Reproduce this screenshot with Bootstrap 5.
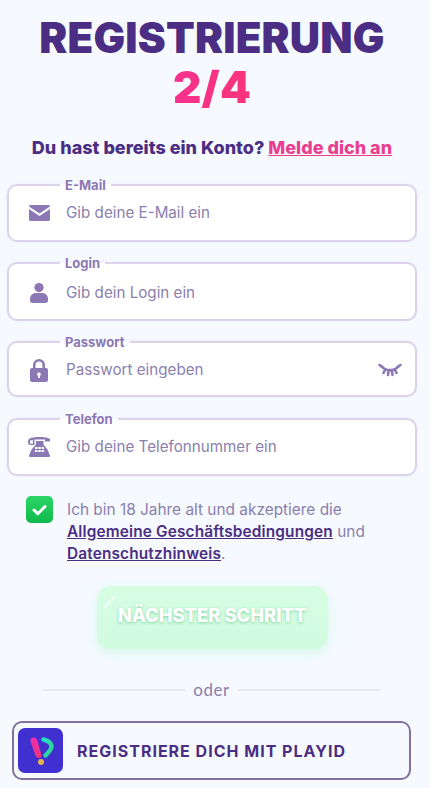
<!DOCTYPE html>
<html lang="de">
<head>
    <meta charset="UTF-8">
    <meta name="viewport" content="width=device-width, initial-scale=1.0">
    <title>Registrierung</title>
    <link href="https://cdn.jsdelivr.net/npm/bootstrap@5.3.0/dist/css/bootstrap.min.css" rel="stylesheet">
    <style>
        body {
            background-color: #f6faff;
            font-family: 'Inter', 'Roboto', sans-serif;
            color: #4b2e83;
            overflow: hidden;
        }
        .page-wrap {
            height: 788px;
            padding: 13px 13px 0 7px;
        }
        .reg-title {
            font-size: 42px;
            font-weight: 900;
            line-height: 50px;
            letter-spacing: 0.2px;
            color: #4b2e83;
            margin: 0;
        }
        .reg-step {
            display: block;
            margin-top: -1px;
            font-size: 44px;
            background: linear-gradient(90deg, #f02bb4, #ff3b55);
            -webkit-background-clip: text;
            background-clip: text;
            color: transparent;
        }
        .have-account {
            font-size: 18px;
            font-weight: 800;
            line-height: 24px;
            margin: 24px 0 0 0;
            letter-spacing: 0;
        }
        .have-account a { color: #e8408f; }
        .form-wrap { margin-top: 18px; }
        .field-box {
            background: #fff;
            border: 2px solid #dcd3ea;
            border-radius: 10px;
            width: 410px;
            height: 64px;
            padding: 0 13px 0 18px;
            margin-bottom: 14px;
            box-shadow: 0 0 2px rgba(120, 100, 170, .15);
        }
        .field-login { height: 65px; }
        .field-login .field-row { height: 46px; }
        .field-pass { height: 62px; margin-bottom: 15px; }
        .field-box legend {
            float: none;
            width: auto;
            margin: 0 0 0 33px;
            padding: 0 5px;
            font-size: 13px;
            font-weight: 700;
            line-height: 14px;
            color: #8b78b5;
        }
        .field-row { height: 42px; }
        .field-ico { flex: none; width: 24px; display: flex; justify-content: center; margin-right: 15px; }
        .field-input {
            border: 0;
            padding: 0;
            background: transparent;
            font-size: 15.2px;
            color: #8b7fae;
            box-shadow: none;
        }
        .field-input::placeholder { color: #8b7fae; opacity: 1; }
        .field-input:focus { box-shadow: none; background: transparent; }
        .eye-ico { flex: none; }
        .agree-row { padding: 0 0 0 19px; margin-top: 20px; }
        .agree-box {
            width: 27px;
            height: 27px;
            border-radius: 5px;
            background: linear-gradient(180deg, #2bd665, #10b94d);
            flex: none;
        }
        .agree-text {
            width: 330px;
            margin: 3px 0 0 14px;
            font-size: 15.4px;
            line-height: 22px;
            color: #8b7fae;
        }
        .agree-text a { color: #4b2e83; font-weight: 600; letter-spacing: .15px; }
        .next-btn {
            display: block;
            width: 231px;
            height: 63px;
            margin: 21px auto 0 auto;
            padding: 0 0 4px 0;
            border: 0;
            border-radius: 14px;
            background: linear-gradient(180deg, #d6fde3, #d0fce0);
            box-shadow: 0 4px 12px rgba(120, 240, 170, .25);
            color: #fff;
            font-size: 18.4px;
            font-weight: 800;
            text-shadow: 0 1px 3px rgba(110, 200, 150, .8);
            position: relative;
        }
        .next-btn:disabled { color: #fff; opacity: 1; }
        .next-btn::before {
            content: "";
            position: absolute;
            left: 4px;
            top: 14px;
            width: 18px;
            height: 3px;
            border-radius: 3px;
            background: rgba(255, 255, 255, .45);
            filter: blur(.6px);
            transform: rotate(-47deg);
        }
        .or-row {
            width: 337px;
            margin: 31px 0 0 36px;
            font-family: 'Lato', sans-serif;
            font-size: 17px;
            line-height: 20px;
            color: #8b7fae;
            letter-spacing: .5px;
        }
        .or-row hr { flex: 1; margin: 0; border-top: 2px solid #e6e8f2; opacity: 1; }
        .playid-btn {
            width: 399px;
            height: 59px;
            margin: 21px 0 0 5px;
            padding: 0 4px;
            background: transparent;
            border: 2px solid #82719f;
            border-radius: 10px;
            color: #4b2e83;
            font-size: 16px;
            font-weight: 700;
            letter-spacing: 1px;
            text-decoration: none;
        }
        .playid-btn:hover { color: #4b2e83; }
        .playid-logo {
            width: 45px;
            height: 45px;
            border-radius: 7px;
            background: #4130d0;
            margin-right: 14px;
        }
    </style>
</head>
<body>
    <div class="page-wrap">
        <h1 class="reg-title text-center">REGISTRIERUNG <span class="reg-step">2/4</span></h1>
        <p class="have-account text-center">Du hast bereits ein Konto? <a href="#">Melde dich an</a></p>

        <form class="form-wrap">
            <fieldset class="field-box">
                <legend>E-Mail</legend>
                <div class="field-row d-flex align-items-center">
                    <span class="field-ico">
                        <svg width="21" height="16" viewBox="0 0 21 16"><path fill="#8b78b5" d="M0 1.500C0 .7.7 0 1.500 0h18c.8 0 1.500.7 1.500 1.500L10.500 8.500zM0 4l10.500 7L21 4v10.500c0 .8-.7 1.500-1.500 1.500h-18C.7 16 0 15.300 0 14.500z"/></svg>
                    </span>
                    <input type="email" class="form-control field-input" placeholder="Gib deine E-Mail ein">
                </div>
            </fieldset>
            <fieldset class="field-box field-login">
                <legend>Login</legend>
                <div class="field-row d-flex align-items-center">
                    <span class="field-ico">
                        <svg width="18" height="20" viewBox="0 0 18 20"><circle cx="9" cy="4.600" r="4.600" fill="#8b78b5"/><path fill="#8b78b5" d="M0 16c0-3.800 2.800-6 6-6h6c3.200 0 6 2.200 6 6v1.500c0 1.400-1.100 2.500-2.500 2.500h-13C1.100 20 0 18.900 0 17.500z"/></svg>
                    </span>
                    <input type="text" class="form-control field-input" placeholder="Gib dein Login ein">
                </div>
            </fieldset>
            <fieldset class="field-box field-pass">
                <legend>Passwort</legend>
                <div class="field-row d-flex align-items-center">
                    <span class="field-ico">
                        <svg width="18" height="23" viewBox="0 0 18 23"><path fill="#8b78b5" fill-rule="evenodd" d="M3 9V6a6 6 0 0 1 12 0v3h1c1.100 0 2 .9 2 2v10c0 1.100-.9 2-2 2H2c-1.100 0-2-.9-2-2V11c0-1.100.9-2 2-2zm2.500 0h7V6a3.500 3.500 0 0 0-7 0zM9 13.500a1.800 1.800 0 0 0-.9 3.400V19h1.800v-2.100A1.800 1.800 0 0 0 9 13.500z"/></svg>
                    </span>
                    <input type="password" class="form-control field-input" placeholder="Passwort eingeben">
                    <svg width="24" height="14" viewBox="0 0 24 14" class="eye-ico ms-2"><g fill="none" stroke="#8b78b5" stroke-width="2.600" stroke-linecap="round"><path d="M3 3c5 5.500 13 5.500 18 0"/><path d="M1.500 2l3 2M22.500 2l-3 2M7 7l-1.500 3M10.500 8.500l-.5 3.500M14 8.500l.5 3.500M17 7l1.500 3"/></g></svg>
                </div>
            </fieldset>
            <fieldset class="field-box">
                <legend>Telefon</legend>
                <div class="field-row d-flex align-items-center">
                    <span class="field-ico">
                        <svg width="23" height="20" viewBox="0 0 23 20"><path fill="#8b78b5" fill-rule="evenodd" d="M1 2C3 .4 7 0 11.500 0S20 .4 22 2v2.500h-5V2.500H6.500V8H2.500C1 8 0 7 0 5.500 0 4 .2 2.800 1 2zM2 3.500v2.500c0 .5.300.8.800.8H5V3.300z"/><path fill="#8b78b5" d="M8 4h7.500v3.500l4 5 2.500 6c.2.800-.3 1.500-1 1.500H2c-.7 0-1.200-.7-1-1.500l2.500-6 4.500-5z"/><g fill="#fff"><rect x="7" y="10" width="2.500" height="2"/><rect x="10.300" y="10" width="2.500" height="2"/><rect x="13.600" y="10" width="2.500" height="2"/><rect x="7" y="13" width="2.500" height="2"/><rect x="10.300" y="13" width="2.500" height="2"/><rect x="13.600" y="13" width="2.500" height="2"/></g></svg>
                    </span>
                    <input type="tel" class="form-control field-input" placeholder="Gib deine Telefonnummer ein">
                </div>
            </fieldset>

            <div class="agree-row d-flex align-items-start">
                <span class="agree-box d-flex align-items-center justify-content-center">
                    <svg width="15" height="12" viewBox="0 0 15 12"><path d="M2 6l3.800 3.800L13 2.500" fill="none" stroke="#fff" stroke-width="3" stroke-linecap="round" stroke-linejoin="round"/></svg>
                </span>
                <p class="agree-text">Ich bin 18 Jahre alt und akzeptiere die <a href="#">Allgemeine Geschäftsbedingungen</a> und <a href="#">Datenschutzhinweis</a>.</p>
            </div>

            <button type="button" class="next-btn" disabled>NÄCHSTER SCHRITT</button>

            <div class="or-row d-flex align-items-center gap-2">
                <hr><span>oder</span><hr>
            </div>

            <a href="#" class="playid-btn d-flex align-items-center">
                <span class="playid-logo d-flex">
                    <svg width="45" height="45" viewBox="0 0 45 45">
                        <defs>
                            <linearGradient id="barGrad" x1="0" y1="0" x2="0" y2="1"><stop offset="0" stop-color="#ee2fb0"/><stop offset="1" stop-color="#f0357a"/></linearGradient>
                            <linearGradient id="arcGrad" x1="0" y1="0" x2="1" y2="1"><stop offset="0" stop-color="#22e0c4"/><stop offset="1" stop-color="#2fd48a"/></linearGradient>
                        </defs>
                        <path d="M12.500 13.500c-.5-2.500 1-4 3-4s3.300 1 3.800 3l4 14c.5 2-.5 3.500-2.300 3.500s-3-1-3.500-2.500z" fill="url(#barGrad)"/>
                        <path d="M25.500 11.500c4 1 7 3 8 6s-3 7-6 10" stroke="url(#arcGrad)" stroke-width="4.500" stroke-linecap="round" fill="none"/>
                        <circle cx="23" cy="34" r="3" fill="#e6b24e"/>
                    </svg>
                </span>
                REGISTRIERE DICH MIT PLAYID
            </a>
        </form>
    </div>
    <script src="https://cdn.jsdelivr.net/npm/bootstrap@5.3.0/dist/js/bootstrap.bundle.min.js"></script>
</body>
</html>
